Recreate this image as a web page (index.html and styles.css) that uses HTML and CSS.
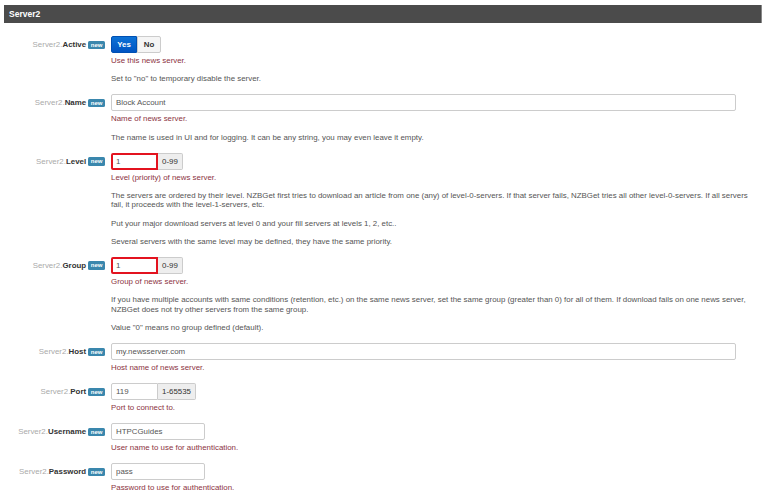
FILE: index.html
```html
<!DOCTYPE html>
<html lang="en">
<head>
    <meta charset="UTF-8">
    <meta name="viewport" content="width=device-width, initial-scale=1.0">
    <title>Server2 settings</title>
    <link rel="stylesheet" href="styles.css">
</head>
<body>

    <div class="section-title">Server2</div>

    <div class="form">

        <!-- Active -->
        <div class="row">
            <div class="label"><span class="prefix">Server2.</span><b>Active</b> <span class="badge">new</span></div>
            <div class="controls">
                <div class="toggle">
                    <button class="btn btn-on">Yes</button><button class="btn">No</button>
                </div>
                <p class="help-title">Use this news server.</p>
                <p>Set to "no" to temporary disable the server.</p>
            </div>
        </div>

        <!-- Name -->
        <div class="row">
            <div class="label"><span class="prefix">Server2.</span><b>Name</b> <span class="badge">new</span></div>
            <div class="controls">
                <input type="text" class="input input-wide" value="Block Account">
                <p class="help-title">Name of news server.</p>
                <p>The name is used in UI and for logging. It can be any string, you may even leave it empty.</p>
            </div>
        </div>

        <!-- Level -->
        <div class="row">
            <div class="label"><span class="prefix">Server2.</span><b>Level</b> <span class="badge">new</span></div>
            <div class="controls">
                <div class="input-group">
                    <input type="text" class="input input-small input-error" value="1"><span class="addon">0-99</span>
                </div>
                <p class="help-title">Level (priority) of news server.</p>
                <p>The servers are ordered by their level. NZBGet first tries to download an article from one (any) of level-0-servers. If that server fails, NZBGet tries all other level-0-servers. If all servers fail, it proceeds with the level-1-servers, etc.</p>
                <p>Put your major download servers at level 0 and your fill servers at levels 1, 2, etc..</p>
                <p>Several servers with the same level may be defined, they have the same priority.</p>
            </div>
        </div>

        <!-- Group -->
        <div class="row">
            <div class="label"><span class="prefix">Server2.</span><b>Group</b> <span class="badge">new</span></div>
            <div class="controls">
                <div class="input-group">
                    <input type="text" class="input input-small input-error" value="1"><span class="addon">0-99</span>
                </div>
                <p class="help-title">Group of news server.</p>
                <p>If you have multiple accounts with same conditions (retention, etc.) on the same news server, set the same group (greater than 0) for all of them. If download fails on one news server, NZBGet does not try other servers from the same group.</p>
                <p>Value "0" means no group defined (default).</p>
            </div>
        </div>

        <!-- Host -->
        <div class="row">
            <div class="label"><span class="prefix">Server2.</span><b>Host</b> <span class="badge">new</span></div>
            <div class="controls">
                <input type="text" class="input input-wide" value="my.newsserver.com">
                <p class="help-title">Host name of news server.</p>
            </div>
        </div>

        <!-- Port -->
        <div class="row">
            <div class="label"><span class="prefix">Server2.</span><b>Port</b> <span class="badge">new</span></div>
            <div class="controls">
                <div class="input-group">
                    <input type="text" class="input input-small" value="119"><span class="addon">1-65535</span>
                </div>
                <p class="help-title">Port to connect to.</p>
            </div>
        </div>

        <!-- Username -->
        <div class="row">
            <div class="label"><span class="prefix">Server2.</span><b>Username</b> <span class="badge">new</span></div>
            <div class="controls">
                <input type="text" class="input input-medium" value="HTPCGuides">
                <p class="help-title">User name to use for authentication.</p>
            </div>
        </div>

        <!-- Password -->
        <div class="row">
            <div class="label"><span class="prefix">Server2.</span><b>Password</b> <span class="badge">new</span></div>
            <div class="controls">
                <input type="text" class="input input-medium" value="pass">
                <p class="help-title">Password to use for authentication.</p>
            </div>
        </div>

    </div>

</body>
</html>
```

FILE: styles.css
```css
body {
    font-family: "Liberation Sans", Arial, sans-serif;
    font-size: 7.9px;
    margin: 0;
    padding: 0;
    background-color: #fff;
    color: #555;
}

.section-title {
    margin: 5px 6px 0 4px;
    height: 18px;
    line-height: 18px;
    padding-left: 5px;
    background-color: #4b4b4b;
    border-right: 1px solid #888;
    color: #fff;
    font-weight: bold;
    font-size: 8.5px;
}

.form {
    padding-top: 13px;
}

.row {
    display: flex;
    padding-bottom: 10.5px;
}

.label {
    width: 105px;
    flex: none;
    height: 17px;
    line-height: 17px;
    text-align: right;
    white-space: nowrap;
    color: #333;
}

.label .prefix {
    color: #aaa;
}

.badge {
    display: inline-block;
    height: 8.5px;
    line-height: 8.5px;
    padding: 0 2.5px;
    vertical-align: 0.5px;
    background-color: #3a87ad;
    color: #fff;
    font-size: 6px;
    font-weight: bold;
    border-radius: 1.5px;
}

.controls {
    margin-left: 6px;
    width: 648px;
}

.controls p {
    margin: 8.8px 0 0;
    line-height: 9.5px;
}

.controls p.help-title {
    margin-top: 3px;
    color: #8c3342;
}

.toggle {
    display: flex;
    height: 17px;
}

.btn {
    font-family: inherit;
    font-size: 7.9px;
    font-weight: bold;
    width: 24px;
    height: 17px;
    margin: 0;
    padding: 0;
    border: 1px solid #ccc;
    background-color: #f5f5f5;
    color: #333;
    border-radius: 0 2px 2px 0;
}

.btn-on {
    width: 26px;
    background: linear-gradient(#0d72d6, #0054c2);
    border-color: #0050b3;
    color: #fff;
    border-radius: 2px 0 0 2px;
}

.input {
    display: block;
    box-sizing: border-box;
    height: 17px;
    margin: 0;
    padding: 0 4px;
    border: 1px solid #ccc;
    border-radius: 2px;
    font-family: inherit;
    font-size: 7.9px;
    color: #555;
    background-color: #fff;
}

.input-wide {
    width: 625px;
}

.input-medium {
    width: 94px;
}

.input-small {
    width: 47px;
    border-radius: 2px 0 0 2px;
}

.input-error {
    border: 2px solid #e3131f;
    padding-left: 3px;
}

.input-group {
    display: flex;
    height: 17px;
}

.addon {
    display: flex;
    align-items: center;
    box-sizing: border-box;
    height: 17px;
    padding: 0 4px;
    background-color: #eee;
    border: 1px solid #ccc;
    border-left: none;
    border-radius: 0 2px 2px 0;
    color: #333;
}
```
